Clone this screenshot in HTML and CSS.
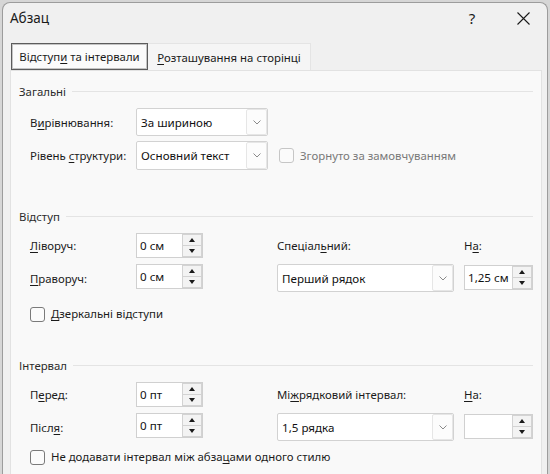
FILE: index.html
```html
<!DOCTYPE html>
<html lang="uk">
<head>
<meta charset="utf-8">
<title>Абзац</title>
<link rel="stylesheet" href="styles.css">
</head>
<body>
<div class="window">
  <div class="titlebar">
    <span class="title">Абзац</span>
    <span class="help">?</span>
    <span class="close"><svg width="13" height="13" viewBox="0 0 13 13"><path d="M0.5 0.5 L12.5 12.5 M12.5 0.5 L0.5 12.5" stroke="#1a1a1a" stroke-width="1.1" fill="none"/></svg></span>
  </div>
  <div class="tabs">
    <div class="tab active"><span>Відступ<u>и</u> та інтервали</span></div>
    <div class="tab"><span><u>Р</u>озташування на сторінці</span></div>
  </div>
  <div class="panel">
    <section class="group g-general">
      <div class="legend"><span>Загальні</span><i></i></div>
      <div class="grid grid-general">
        <label class="lbl">В<u>и</u>рівнювання:</label>
        <div class="select w132"><span class="val">За шириною</span><span class="drop"><svg width="8" height="5" viewBox="0 0 8 5"><path d="M0.5 0.5 L4 4 L7.5 0.5" stroke="#8a8a8a" fill="none"/></svg></span></div>
        <span></span>
        <label class="lbl">Рівень <u>с</u>труктури:</label>
        <div class="select w132"><span class="val">Основний текст</span><span class="drop"><svg width="8" height="5" viewBox="0 0 8 5"><path d="M0.5 0.5 L4 4 L7.5 0.5" stroke="#8a8a8a" fill="none"/></svg></span></div>
        <div class="check disabled"><span class="box"></span><span>Згорнуто за замовчуванням</span></div>
      </div>
    </section>

    <section class="group g-indent">
      <div class="legend"><span>Відступ</span><i></i></div>
      <div class="grid grid-main">
        <label class="lbl"><u>Л</u>іворуч:</label>
        <div class="spin"><span class="val">0 см</span><span class="btns"><span class="up"></span><span class="down"></span></span></div>
        <label class="lbl">Спеціал<u>ь</u>ний:</label>
        <label class="lbl">Н<u>а</u>:</label>
        <label class="lbl"><u>П</u>раворуч:</label>
        <div class="spin"><span class="val">0 см</span><span class="btns"><span class="up"></span><span class="down"></span></span></div>
        <div class="select w177"><span class="val">Перший рядок</span><span class="drop"><svg width="8" height="5" viewBox="0 0 8 5"><path d="M0.5 0.5 L4 4 L7.5 0.5" stroke="#8a8a8a" fill="none"/></svg></span></div>
        <div class="spin small"><span class="val">1,25 см</span><span class="btns"><span class="up"></span><span class="down"></span></span></div>
      </div>
      <div class="check row-check"><span class="box"></span><span><u>Д</u>зеркальні відступи</span></div>
    </section>

    <section class="group g-spacing">
      <div class="legend"><span>Інтервал</span><i></i></div>
      <div class="grid grid-main">
        <label class="lbl">П<u>е</u>ред:</label>
        <div class="spin"><span class="val">0 пт</span><span class="btns"><span class="up"></span><span class="down"></span></span></div>
        <label class="lbl">Мі<u>ж</u>рядковий інтервал:</label>
        <label class="lbl"><u>Н</u>а:</label>
        <label class="lbl">Післ<u>я</u>:</label>
        <div class="spin"><span class="val">0 пт</span><span class="btns"><span class="up"></span><span class="down"></span></span></div>
        <div class="select w177"><span class="val">1,5 рядка</span><span class="drop"><svg width="8" height="5" viewBox="0 0 8 5"><path d="M0.5 0.5 L4 4 L7.5 0.5" stroke="#8a8a8a" fill="none"/></svg></span></div>
        <div class="spin small"><span class="val"></span><span class="btns"><span class="up"></span><span class="down"></span></span></div>
      </div>
      <div class="check row-check2"><span class="box"></span><span>Не додавати інтервал між абза<u>ц</u>ами одного стилю</span></div>
    </section>
  </div>
</div>
</body>
</html>
```

FILE: styles.css
```css
* { box-sizing: border-box; }
html, body { margin: 0; padding: 0; }
body {
  width: 550px;
  height: 474px;
  overflow: hidden;
  background: #d6d6d6;
  font-family: "Noto Sans", "Open Sans", sans-serif;
  font-size: 11.4px;
  color: #1b1b1b;
}
u {
  text-decoration-thickness: 1px;
  text-underline-offset: 2px;
}
.window {
  margin: 2px 0 0 2px;
  width: 546px;
  height: 490px;
  background: #f0f0f0;
  border: 1px solid #9c9c9c;
  border-bottom: none;
  border-radius: 8px 8px 0 0;
  display: flex;
  flex-direction: column;
  overflow: hidden;
}
.titlebar {
  height: 30px;
  display: flex;
  align-items: center;
  padding: 0 17px 0 7px;
  flex-shrink: 0;
}
.title {
  flex: 1;
  font-size: 13.5px;
  color: #1a1a1a;
}
.help {
  width: 20px;
  text-align: center;
  font-size: 15px;
  margin-right: 35px;
  color: #1a1a1a;
}
.close {
  width: 13px;
  height: 13px;
  display: flex;
}
.tabs {
  display: flex;
  margin: 10px 0 0 8px;
  height: 27px;
  flex-shrink: 0;
}
.tab {
  height: 27px;
  display: flex;
  align-items: center;
  justify-content: center;
  color: #1a1a1a;
  white-space: nowrap;
}
.tab.active {
  width: 137px;
  background: #fbfbfb;
  border: 1px solid #5c5c5c;
  box-shadow: inset 0 0 0 1px #c4c4c4;
}
.tab:not(.active) {
  width: 163px;
  background: #f5f5f5;
  border-top: 1px solid #e4e4e4;
  border-right: 1px solid #e4e4e4;
}
.panel {
  margin-left: 7px;
  width: 532px;
  flex: 1;
  background: #f9f9f9;
  border: 1px solid #e2e2e2;
  padding-top: 13px;
}
.legend {
  display: flex;
  align-items: center;
  height: 16px;
  line-height: 16px;
  padding-left: 8px;
  margin-right: 8px;
  color: #2b2b2b;
}
.legend i {
  flex: 1;
  height: 1px;
  background: #e4e4e4;
  margin-left: 6px;
  margin-top: -2px;
}
.grid {
  display: grid;
  margin-left: 19px;
  margin-top: 8px;
}
.grid-general {
  grid-template-columns: 106px 142px auto;
  grid-template-rows: 28px 29px;
  row-gap: 5px;
  align-items: center;
}
.grid-main {
  grid-template-columns: 106px 141px 187px 69px;
  grid-template-rows: 25px 28px;
  row-gap: 6px;
  align-items: center;
}
.grid-main .spin { align-self: start; }
.grid-main .spin.small { margin-top: 1px; }
.lbl {
  line-height: 16px;
  padding-top: 1px;
  white-space: nowrap;
}
.select {
  height: 100%;
  background: #fff;
  border: 1px solid #d2d2d2;
  border-radius: 2px;
  display: flex;
  align-items: stretch;
}
.w132 { width: 132px; }
.w177 { width: 177px; height: 28px; }
.select .val {
  flex: 1;
  padding-left: 4px;
  display: flex;
  align-items: center;
  color: #111;
  font-size: 11.6px;
}
.drop {
  width: 21px;
  border: 1px solid #e6e6e6;
  border-radius: 2px;
  background: #fcfcfc;
  display: flex;
  align-items: center;
  justify-content: center;
}
.spin {
  width: 67px;
  height: 25px;
  background: #fff;
  border: 1px solid #d0d0d0;
  display: flex;
}
.spin.small { width: 69px; }
.spin .val {
  flex: 1;
  padding-left: 3px;
  display: flex;
  align-items: center;
  color: #111;
  font-size: 11.6px;
  white-space: nowrap;
}
.btns {
  width: 20px;
  display: flex;
  flex-direction: column;
}
.btns span {
  flex: 1;
  background: #f3f3f3;
  border: 1px solid #d3d3d3;
  display: flex;
  align-items: center;
  justify-content: center;
}
.btns .down { border-top: none; }
.btns .up::before {
  content: "";
  border-left: 3px solid transparent;
  border-right: 3px solid transparent;
  border-bottom: 4px solid #1a1a1a;
}
.btns .down::before {
  content: "";
  border-left: 3px solid transparent;
  border-right: 3px solid transparent;
  border-top: 4px solid #1a1a1a;
}
.check {
  display: flex;
  align-items: center;
  height: 16px;
  line-height: 16px;
  white-space: nowrap;
}
.check .box {
  width: 15px;
  height: 15px;
  border: 1px solid #7a7a7a;
  border-radius: 3px;
  background: #fbfbfb;
  margin-right: 6px;
  flex-shrink: 0;
}
.check.disabled { color: #787878; padding-left: 1px; }
.check.disabled .box { border-color: #c6c6c6; }
.row-check { margin: 14px 0 0 19px; }
.g-indent { margin-top: 39px; }
.g-spacing { margin-top: 36px; }
.row-check2 { margin: 8px 0 0 19px; }
```
